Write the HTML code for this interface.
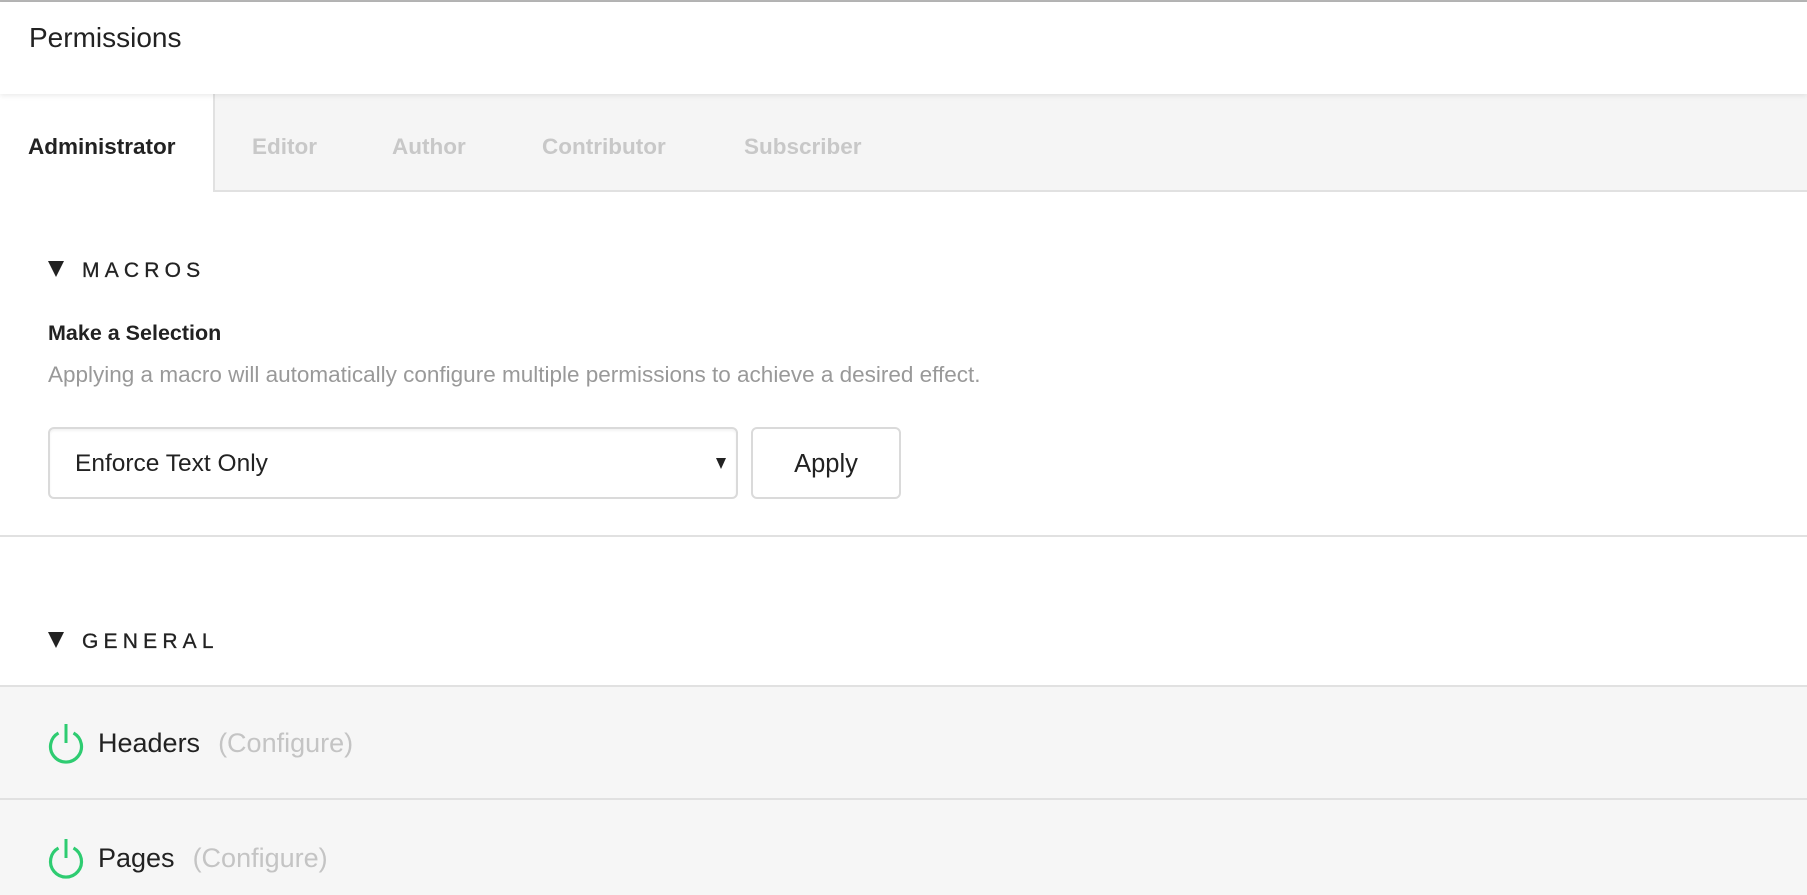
<!DOCTYPE html>
<html><head><meta charset="utf-8">
<style>
*{margin:0;padding:0;box-sizing:border-box}
html,body{width:1807px;height:895px;overflow:hidden;background:#fff;font-family:"Liberation Sans",sans-serif;color:#222}
.top{position:absolute;left:0;top:0;width:1807px;height:2px;background:#b5b5b5}
.hdr{position:absolute;left:0;top:2px;width:1807px;height:92px;background:#fff;box-shadow:0 2px 5px rgba(0,0,0,0.08);z-index:2}
.hdr span{position:absolute;left:29px;top:20px;font-size:28px;color:#222}
.tabs{position:absolute;left:0;top:94px;width:1807px;height:98px;background:#f5f5f5;border-bottom:2px solid #e1e1e1}
.tab{position:absolute;top:40px;font-size:22.5px;color:#c8c8c8;font-weight:bold}
.act{position:absolute;left:0;top:0;width:215px;height:98px;background:#fff;border-right:2px solid #e1e1e1}
.sec{position:absolute;font-size:21px;letter-spacing:5.2px;color:#222;-webkit-text-stroke:0.3px #222}
.tri{position:absolute;width:0;height:0;border-left:8px solid transparent;border-right:8px solid transparent;border-top:16px solid #222}
.lbl{position:absolute;left:48px;top:321px;font-size:21.5px;font-weight:bold;color:#222}
.desc{position:absolute;left:48px;top:362px;font-size:22.5px;color:#999}
.sel{position:absolute;left:48px;top:427px;width:690px;height:72px;border:2px solid #dadada;border-radius:6px;box-shadow:inset 0 2px 2px rgba(0,0,0,0.05)}
.sel span{position:absolute;left:25px;top:21px;font-size:24.5px;color:#222}
.sel i{position:absolute;right:10px;top:29px;border-left:5px solid transparent;border-right:5px solid transparent;border-top:11px solid #222}
.btn{position:absolute;left:751px;top:427px;width:150px;height:72px;border:2px solid #dadada;border-radius:6px;text-align:center;line-height:70px;font-size:25.5px;color:#222}
.hr{position:absolute;left:0;width:1807px;height:2px;background:#e1e1e1}
.row{position:absolute;left:0;width:1807px;background:#f6f6f6}
.row b{position:absolute;left:98px;font-size:27px;font-weight:normal;color:#222}
.row em{font-style:normal;color:#c4c4c4;margin-left:18px}
.row svg{position:absolute;left:47px}
</style></head><body>
<div class="top"></div>
<div class="hdr"><span>Permissions</span></div>
<div class="tabs">
<div class="act"></div>
<div class="tab" style="left:28px;color:#222">Administrator</div>
<div class="tab" style="left:252px">Editor</div>
<div class="tab" style="left:392px">Author</div>
<div class="tab" style="left:542px">Contributor</div>
<div class="tab" style="left:744px">Subscriber</div>
</div>
<div class="tri" style="left:48px;top:261px"></div>
<div class="sec" style="left:82px;top:259px">MACROS</div>
<div class="lbl">Make a Selection</div>
<div class="desc">Applying a macro will automatically configure multiple permissions to achieve a desired effect.</div>
<div class="sel"><span>Enforce Text Only</span><i></i></div>
<div class="btn">Apply</div>
<div class="hr" style="top:535px"></div>
<div class="tri" style="left:48px;top:632px"></div>
<div class="sec" style="left:82px;top:630px">GENERAL</div>
<div class="hr" style="top:685px"></div>
<div class="row" style="top:687px;height:111px">
<svg width="38" height="42" viewBox="0 0 38 42" style="top:35px"><path d="M11.5 11 A15.5 15.5 0 1 0 26.5 11" fill="none" stroke="#2ecc71" stroke-width="3.2"/><line x1="19" y1="2" x2="19" y2="21" stroke="#2ecc71" stroke-width="3"/></svg>
<b style="top:41px">Headers<em>(Configure)</em></b>
</div>
<div class="hr" style="top:798px"></div>
<div class="row" style="top:800px;height:95px">
<svg width="38" height="42" viewBox="0 0 38 42" style="top:37px"><path d="M11.5 11 A15.5 15.5 0 1 0 26.5 11" fill="none" stroke="#2ecc71" stroke-width="3.2"/><line x1="19" y1="2" x2="19" y2="21" stroke="#2ecc71" stroke-width="3"/></svg>
<b style="top:43px">Pages<em>(Configure)</em></b>
</div>
</body></html>
